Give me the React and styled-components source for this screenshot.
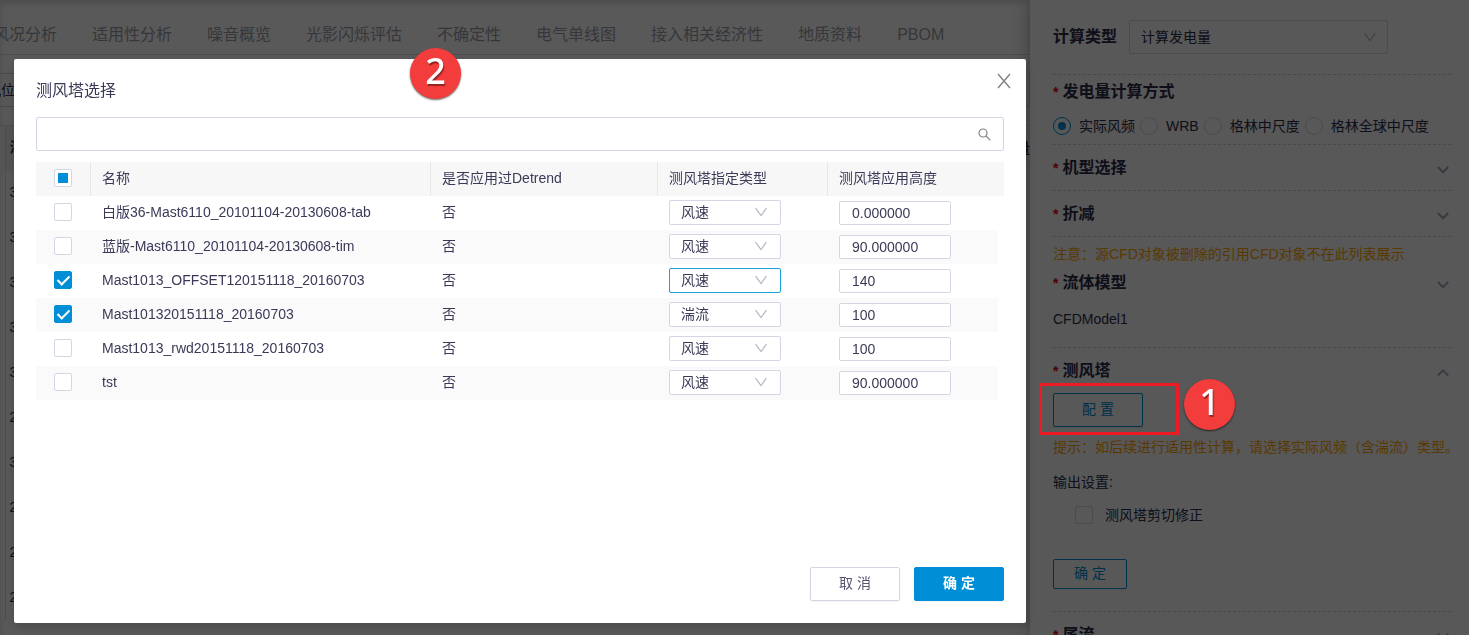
import React from 'react';
import styled, { createGlobalStyle, css } from 'styled-components';

const GlobalStyle = createGlobalStyle`
  * { box-sizing: border-box; }
  body {
    margin: 0;
    font-family: "Liberation Sans", "Noto Sans CJK SC", sans-serif;
    font-size: 14px;
    line-height: 22px;
    color: #2c2c48;
    background: #fff;
  }
  button, input, select { font: inherit; color: inherit; }
`;

const Page = styled.div`
  display: flex;
  height: 100vh;
  overflow: hidden;
`;

/* ---------- workspace behind the dialog ---------- */

const Workspace = styled.main`
  flex: 1;
  min-width: 0;
  overflow: hidden;
  box-shadow: inset 0 3px 6px rgba(0, 0, 0, 0.16);
`;

const Tabs = styled.nav`
  display: flex;
  gap: 35px;
  height: 55px;
  padding-top: 13px;
  margin-left: -7px;
  border-bottom: 1px solid #dcdce2;
`;

const Tab = styled.a`
  flex: none;
  font-size: 16px;
  line-height: 44px;
  color: #9c9ca8;
  text-decoration: none;
`;

const FilterBar = styled.div`
  height: 34px;
  margin: 18px 0;
  margin-left: -14px;
  line-height: 32px;
  border: 1px solid #d0d0d6;
`;

const SiteTable = styled.table`
  width: 100%;
  border-collapse: collapse;
  table-layout: fixed;
  th, td {
    height: 45px;
    padding: 0 4px 3px;
    text-align: left;
    border-left: 1px solid #dcdce2;
    white-space: nowrap;
  }
  th:first-child, td:first-child { width: 5px; padding: 0; border-left: 0; }
  th:last-child { text-align: right; padding: 0; border-left: 0; }
  td:last-child { border-left: 0; }
  th { background: #f3f3f5; border-top: 1px solid #dcdce2; }
`;

/* ---------- settings panel ---------- */

const Panel = styled.aside`
  position: relative;
  flex: none;
  width: 439px;
  padding: 0 18px 0 23px;
  background: #fbfbfb;
  box-shadow: -4px 0 16px rgba(0, 0, 0, 0.2);
`;

const Section = styled.section`
  border-bottom: 1px dashed #d2d2da;
`;

const TypeRow = styled(Section)`
  display: flex;
  align-items: center;
  gap: 12px;
  height: 75px;
`;

const TypeLabel = styled.label`
  font-size: 16px;
  font-weight: bold;
`;

const SectionHead = styled.div`
  display: flex;
  align-items: center;
  height: ${(p) => p.$height || 45}px;
  svg { margin-left: auto; margin-right: 2px; }
`;

const SectionTitle = styled.h3`
  margin: 0;
  font-size: 16px;
  font-weight: bold;
  &::before {
    content: "*";
    margin-right: 4px;
    font-size: 14px;
    color: #e60012;
  }
`;

const RadioGroup = styled.div`
  display: flex;
  gap: 5px;
  height: 36px;
  align-items: center;
`;

const Choice = styled.label`
  display: flex;
  align-items: center;
  gap: ${(p) => p.$gap || 8}px;
  white-space: nowrap;
`;

const Radio = styled.input.attrs({ type: 'radio' })`
  appearance: none;
  width: 18px;
  height: 18px;
  margin: 0;
  border: 1px solid #d5d5e2;
  border-radius: 50%;
  display: grid;
  place-items: center;
  &:checked { border-color: #008fd7; }
  &:checked::after {
    content: "";
    width: 8px;
    height: 8px;
    border-radius: 50%;
    background: #008fd7;
  }
`;

const Notice = styled.p`
  margin: 0;
  line-height: ${(p) => p.$height}px;
  color: #ffa400;
  white-space: nowrap;
`;

const ModelName = styled.p`
  margin: 0;
  padding-bottom: 4px;
  line-height: 48px;
`;

const OutputLabel = styled.p`
  margin: 0;
  line-height: 30px;
`;

const OutputOption = styled.div`
  display: flex;
  height: 36px;
  padding-left: 22px;
  margin-bottom: 26px;
`;

const Callout = styled.div`
  position: relative;
  display: flex;
`;

/* ---------- shared controls ---------- */

const Button = styled.button`
  width: ${(p) => (p.$small ? 74 : 90)}px;
  height: ${(p) => (p.$small ? 30 : 34)}px;
  padding: 0 0 2px;
  border-radius: 2px;
  border: 1px solid #d5d5e6;
  background: transparent;
  color: #55556f;
  box-shadow: 0 1px 2px rgba(0, 0, 0, 0.05);
  ${(p) => p.$kind === 'outline' && css`
    border-color: #008fd7;
    color: #008fd7;
  `}
  ${(p) => p.$kind === 'primary' && css`
    border-color: #008fd7;
    background: #008fd7;
    color: #fff;
    font-weight: bold;
  `}
`;

const SelectBox = styled.span`
  position: relative;
  display: flex;
  width: ${(p) => (p.$large ? 259 : 112)}px;
  height: ${(p) => (p.$large ? 34 : 25)}px;
  svg {
    position: absolute;
    right: ${(p) => (p.$large ? 12 : 14)}px;
    top: 50%;
    margin-top: -6px;
    pointer-events: none;
  }
`;

const Select = styled.select`
  appearance: none;
  width: 100%;
  padding: 0 11px ${(p) => (p.$raised ? 4 : 0)}px;
  border: 1px solid ${(p) => (p.$active ? '#1b9fdb' : '#d5d5e6')};
  border-radius: 2px;
  background: ${(p) => (p.$raised ? '#fff' : 'transparent')};
  outline: 0;
`;

const Checkbox = styled.input.attrs({ type: 'checkbox' })`
  appearance: none;
  display: grid;
  place-items: center;
  width: 18px;
  height: 18px;
  margin: 0;
  border: 1px solid #d5d5e6;
  border-radius: 2px;
  background: transparent;
  &:checked { background: #008fd7; border-color: #008fd7; }
  &:checked::after {
    content: "";
    width: 5px;
    height: 10px;
    margin-top: -3px;
    border: solid #fff;
    border-width: 0 2px 2px 0;
    transform: rotate(45deg);
  }
  &:indeterminate::after {
    content: "";
    width: 10px;
    height: 10px;
    background: #008fd7;
  }
`;

/* ---------- dialog ---------- */

const Overlay = styled.div`
  position: fixed;
  inset: 0;
  z-index: 10;
  padding: 59px 443px 12px 14px;
  background: rgba(0, 0, 0, 0.65);
`;

const Dialog = styled.div`
  position: relative;
  padding: 21px 22px 22px;
  border-radius: 2px;
  background: #fff;
  color: #3a3a58;
  box-shadow: 0 4px 12px rgba(0, 0, 0, 0.2);
`;

const DialogHead = styled.header`
  display: flex;
  justify-content: space-between;
  height: 37px;
`;

const DialogTitle = styled.h2`
  margin: 0;
  font-size: 16px;
  font-weight: normal;
`;

const CloseButton = styled.button`
  display: flex;
  align-items: center;
  justify-content: center;
  width: 22px;
  height: 22px;
  margin: -10px -11px 0 0;
  padding: 0;
  border: 0;
  background: none;
  color: #858585;
`;

const SearchBox = styled.label`
  display: flex;
  align-items: center;
  height: 34px;
  margin-bottom: 11px;
  padding: 0 12px;
  border: 1px solid #d5d5e6;
  border-radius: 2px;
  input { flex: 1; border: 0; outline: 0; padding: 0; background: none; }
`;

const TableArea = styled.div`
  min-height: 405px;
`;

const MastTable = styled.table`
  width: 100%;
  table-layout: fixed;
  border-collapse: separate;
  border-spacing: 0;
  tbody tr:nth-child(even) td { background: #fafafa; }
  input[type="checkbox"] { background-color: #fff; }
  input[type="checkbox"]:checked { background-color: #008fd7; }
`;

const HeadCell = styled.th`
  height: 34px;
  padding: 0 11px 2px;
  background: #f7f7f8;
  font-weight: normal;
  text-align: left;
  &:not(:last-child) { border-right: 1px solid #e6e6ec; }
`;

const Cell = styled.td`
  height: 34px;
  padding: 0 11px ${(p) => (p.$low ? 1 : 2)}px;
`;

const CheckSlot = styled.span`
  display: flex;
  padding-left: 7px;
`;

const HeightInput = styled.input`
  display: block;
  width: 112px;
  height: 24px;
  padding: 0 12px;
  border: 1px solid #d5d5e6;
  border-radius: 2px;
  background: #fff;
  line-height: 22px;
`;

const Actions = styled.footer`
  display: flex;
  justify-content: flex-end;
  gap: 14px;
`;

/* ---------- step markers ---------- */

const StepBadge = styled.span`
  position: absolute;
  z-index: 20;
  left: ${(p) => p.$left}px;
  top: ${(p) => p.$top}px;
  width: 51px;
  height: 51px;
  border-radius: 50%;
  background: #f33c3c;
  box-shadow: 0 1px 2px rgba(0, 0, 0, 0.6);
  color: #fff;
  font: 500 36px/45px "Noto Sans", sans-serif;
  text-align: center;
  text-shadow: 1px 2px 1px rgba(0, 0, 0, 0.4);
`;

const StepFrame = styled.span`
  position: absolute;
  z-index: 20;
  left: -14px;
  top: -10px;
  width: 140px;
  height: 52px;
  border: 3px solid #ed1c24;
  pointer-events: none;
`;

/* ---------- icons ---------- */

const ThinDown = ({ color = '#b4b4c4' }) => (
  <svg width="12" height="12" viewBox="0 0 12 12" fill="none" stroke={color} strokeWidth="1.2" aria-hidden="true">
    <path d="M.6 2.2 6 9.6l5.4-7.4" />
  </svg>
);

const Chevron = ({ up }) => (
  <svg width="12" height="12" viewBox="0 0 12 12" fill="none" stroke="#a3a3bb" strokeWidth="2" aria-hidden="true">
    <path d={up ? 'M.8 10.5 6 5.3l5.2 5.2' : 'M.8 5 6 10.2 11.2 5'} />
  </svg>
);

const CloseIcon = () => (
  <svg width="14" height="16" viewBox="0 0 14 16" fill="none" stroke="currentColor" strokeWidth="1.5" aria-hidden="true">
    <path d="M1 1l12 14M13 1 1 15" />
  </svg>
);

const SearchIcon = () => (
  <svg width="13" height="13" viewBox="0 0 13 13" fill="none" stroke="#858585" strokeWidth="1.2" aria-hidden="true">
    <circle cx="5" cy="5" r="4" />
    <path d="M8 8l4.4 4.4" />
  </svg>
);

const tabs = ['风况分析', '适用性分析', '噪音概览', '光影闪烁评估', '不确定性', '电气单线图', '接入相关经济性', '地质资料', 'PBOM'];
const siteRows = [3, 3, 3, 3, 3, 2, 3, 2, 2, 2];
const methods = ['实际风频', 'WRB', '格林中尺度', '格林全球中尺度'];
const masts = [
  { name: '白版36-Mast6110_20101104-20130608-tab', type: '风速', height: '0.000000' },
  { name: '蓝版-Mast6110_20101104-20130608-tim', type: '风速', height: '90.000000' },
  { name: 'Mast1013_OFFSET120151118_20160703', type: '风速', height: '140', checked: true, active: true },
  { name: 'Mast101320151118_20160703', type: '湍流', height: '100', checked: true },
  { name: 'Mast1013_rwd20151118_20160703', type: '风速', height: '100' },
  { name: 'tst', type: '风速', height: '90.000000' },
];

const markPartial = (el) => {
  if (el) el.indeterminate = true;
};

function Head({ title, height, up, plain }) {
  return (
    <SectionHead $height={height}>
      <SectionTitle>{title}</SectionTitle>
      {!plain && <Chevron up={up} />}
    </SectionHead>
  );
}

function MastRow({ mast }) {
  return (
    <tr>
      <Cell>
        <CheckSlot>
          <Checkbox defaultChecked={mast.checked} aria-label={mast.name} />
        </CheckSlot>
      </Cell>
      <Cell>{mast.name}</Cell>
      <Cell>否</Cell>
      <Cell>
        <SelectBox>
          <Select defaultValue={mast.type} $raised $active={mast.active} aria-label="测风塔指定类型">
            <option>风速</option>
            <option>湍流</option>
          </Select>
          <ThinDown />
        </SelectBox>
      </Cell>
      <Cell $low>
        <HeightInput defaultValue={mast.height} aria-label="测风塔应用高度" />
      </Cell>
    </tr>
  );
}

function MastDialog() {
  return (
    <Overlay>
      <Dialog role="dialog" aria-labelledby="mast-title">
        <DialogHead>
          <DialogTitle id="mast-title">测风塔选择</DialogTitle>
          <CloseButton aria-label="关闭"><CloseIcon /></CloseButton>
        </DialogHead>
        <SearchBox>
          <input type="text" aria-label="搜索" />
          <SearchIcon />
        </SearchBox>
        <TableArea>
          <MastTable>
            <colgroup>
              <col style={{ width: 55 }} />
              <col />
              <col style={{ width: 227 }} />
              <col style={{ width: 170 }} />
              <col style={{ width: 170 }} />
              <col style={{ width: 6 }} />
            </colgroup>
            <thead>
              <tr>
                <HeadCell>
                  <CheckSlot><Checkbox ref={markPartial} aria-label="全选" /></CheckSlot>
                </HeadCell>
                <HeadCell>名称</HeadCell>
                <HeadCell>是否应用过Detrend</HeadCell>
                <HeadCell>测风塔指定类型</HeadCell>
                <HeadCell colSpan={2}>测风塔应用高度</HeadCell>
              </tr>
            </thead>
            <tbody>
              {masts.map((m) => <MastRow key={m.name} mast={m} />)}
            </tbody>
          </MastTable>
        </TableArea>
        <Actions>
          <Button>取 消</Button>
          <Button $kind="primary">确 定</Button>
        </Actions>
        <StepBadge $left={396} $top={-11}>2</StepBadge>
      </Dialog>
    </Overlay>
  );
}

function SettingsPanel() {
  return (
    <Panel>
      <TypeRow>
        <TypeLabel htmlFor="calc-type">计算类型</TypeLabel>
        <SelectBox $large>
          <Select id="calc-type"><option>计算发电量</option></Select>
          <ThinDown />
        </SelectBox>
      </TypeRow>
      <Section>
        <Head title="发电量计算方式" height={33} plain />
        <RadioGroup>
          {methods.map((m, i) => (
            <Choice key={m}>
              <Radio name="method" defaultChecked={i === 0} />
              {m}
            </Choice>
          ))}
        </RadioGroup>
      </Section>
      <Section><Head title="机型选择" /></Section>
      <Section><Head title="折减" /></Section>
      <Section>
        <Notice $height={34}>注意：源CFD对象被删除的引用CFD对象不在此列表展示</Notice>
        <Head title="流体模型" height={24} />
        <ModelName>CFDModel1</ModelName>
      </Section>
      <Section>
        <Head title="测风塔" up />
        <Callout>
          <Button $kind="outline">配 置</Button>
          <StepFrame />
          <StepBadge $left={131} $top={-14}>1</StepBadge>
        </Callout>
        <Notice $height={40}>提示：如后续进行适用性计算，请选择实际风频（含湍流）类型。</Notice>
        <OutputLabel>输出设置:</OutputLabel>
        <OutputOption>
          <Choice $gap={12}>
            <Checkbox />
            测风塔剪切修正
          </Choice>
        </OutputOption>
        <Button $kind="outline" $small>确 定</Button>
        <SectionHead $height={22} />
      </Section>
      <Section><Head title="尾流" /></Section>
    </Panel>
  );
}

export default function App() {
  return (
    <>
      <GlobalStyle />
      <Page>
        <Workspace>
          <Tabs>
            {tabs.map((t) => <Tab key={t} href="#">{t}</Tab>)}
          </Tabs>
          <FilterBar>机位</FilterBar>
          <SiteTable>
            <thead>
              <tr><th /><th>海拔</th><th>容量</th></tr>
            </thead>
            <tbody>
              {siteRows.map((v, i) => (
                <tr key={i}><td /><td>{v}</td><td /></tr>
              ))}
            </tbody>
          </SiteTable>
        </Workspace>
        <SettingsPanel />
      </Page>
      <MastDialog />
    </>
  );
}
